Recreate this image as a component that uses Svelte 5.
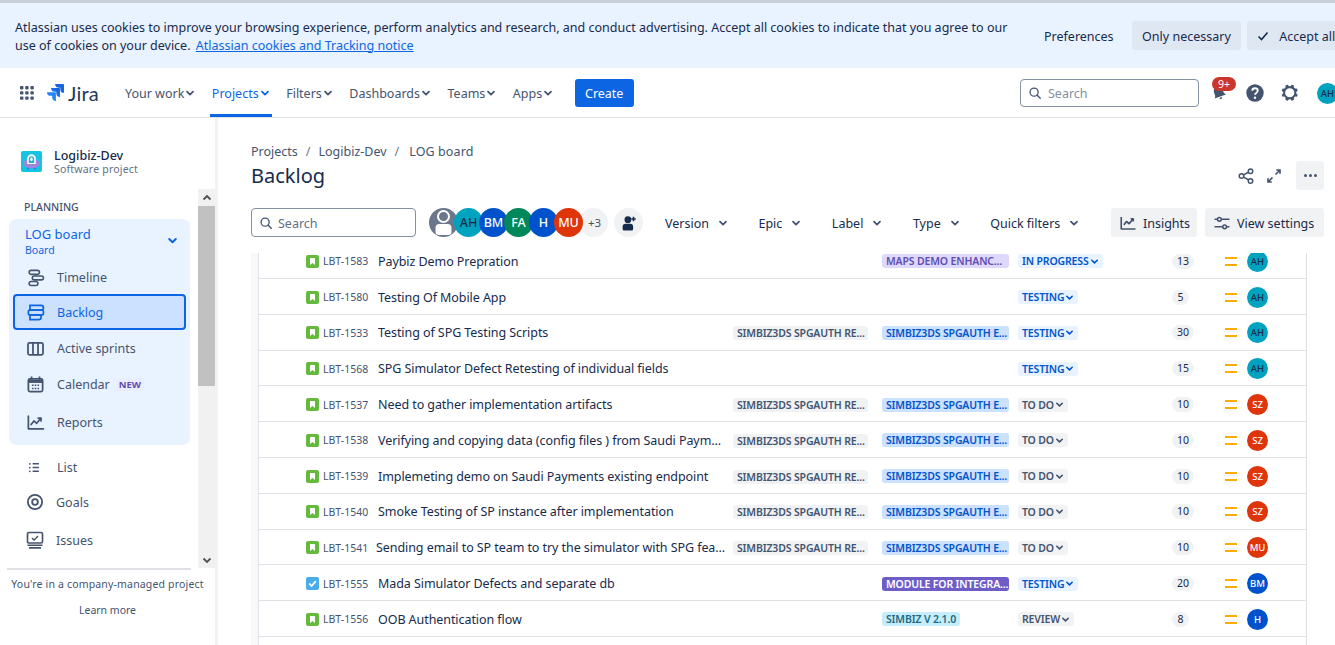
<script>
  const NAV = [
    { label: 'Your work' },
    { label: 'Projects', active: true },
    { label: 'Filters' },
    { label: 'Dashboards' },
    { label: 'Teams' },
    { label: 'Apps' }
  ];
  const LBL = 'SIMBIZ3DS SPGAUTH RE...';
  const EPIC = 'SIMBIZ3DS SPGAUTH E...';
  const ROWS = [
    { key: 'LBT-1583', title: 'Paybiz Demo Prepration', epic: 'MAPS DEMO ENHANC...', ec: 'lav', st: 'IN PROGRESS', sc: 'blue', est: 13, av: 'AH' },
    { key: 'LBT-1580', title: 'Testing Of Mobile App', st: 'TESTING', sc: 'blue', est: 5, av: 'AH' },
    { key: 'LBT-1533', title: 'Testing of SPG Testing Scripts', label: LBL, epic: EPIC, ec: 'sky', st: 'TESTING', sc: 'blue', est: 30, av: 'AH' },
    { key: 'LBT-1568', title: 'SPG Simulator Defect Retesting of individual fields', st: 'TESTING', sc: 'blue', est: 15, av: 'AH' },
    { key: 'LBT-1537', title: 'Need to gather implementation artifacts', label: LBL, epic: EPIC, ec: 'sky', st: 'TO DO', sc: 'grey', est: 10, av: 'SZ' },
    { key: 'LBT-1538', title: 'Verifying and copying data (config files ) from Saudi Paym...', label: LBL, epic: EPIC, ec: 'sky', st: 'TO DO', sc: 'grey', est: 10, av: 'SZ' },
    { key: 'LBT-1539', title: 'Implemeting demo on Saudi Payments existing endpoint', label: LBL, epic: EPIC, ec: 'sky', st: 'TO DO', sc: 'grey', est: 10, av: 'SZ' },
    { key: 'LBT-1540', title: 'Smoke Testing of SP instance after implementation', label: LBL, epic: EPIC, ec: 'sky', st: 'TO DO', sc: 'grey', est: 10, av: 'SZ' },
    { key: 'LBT-1541', tight: true, title: 'Sending email to SP team to try the simulator with SPG fea...', label: LBL, epic: EPIC, ec: 'sky', st: 'TO DO', sc: 'grey', est: 10, av: 'MU' },
    { key: 'LBT-1555', title: 'Mada Simulator Defects and separate db', task: true, epic: 'MODULE FOR INTEGRA...', ec: 'violet', st: 'TESTING', sc: 'blue', est: 20, av: 'BM' },
    { key: 'LBT-1556', title: 'OOB Authentication flow', epic: 'SIMBIZ V 2.1.0', ec: 'cyan', st: 'REVIEW', sc: 'grey', est: 8, av: 'H' },
    { key: '', title: '', st: '', est: '', av: 'H' }
  ];
  const AVC = { AH: 'teal', SZ: 'red', MU: 'red', BM: 'blue', H: 'blue', FA: 'green' };
  const FILTERS = ['Version', 'Epic', 'Label', 'Type', 'Quick filters'];
</script>

{#snippet chev(cls = '')}
  <svg class="chev {cls}" viewBox="0 0 10 10"><path d="M2 3.6 5 6.6 8 3.6" fill="none" stroke="currentColor" stroke-width="1.8" stroke-linecap="round" stroke-linejoin="round"/></svg>
{/snippet}

{#snippet searchIcon()}
  <svg class="sicon" viewBox="0 0 16 16"><circle cx="7" cy="7" r="4.6" fill="none" stroke="#44546f" stroke-width="1.5"/><path d="M10.5 10.5 14 14" stroke="#44546f" stroke-width="1.6" stroke-linecap="round"/></svg>
{/snippet}

<div class="app">
  <section class="banner">
    <p class="banner-text">Atlassian uses cookies to improve your browsing experience, perform analytics and research, and conduct advertising. Accept all cookies to indicate that you agree to our use of cookies on your device. <a href="#top">Atlassian cookies and Tracking notice</a></p>
    <div class="banner-actions">
      <button class="bbtn plain">Preferences</button>
      <button class="bbtn">Only necessary</button>
      <button class="bbtn accept">
        <svg viewBox="0 0 14 14"><path d="M2.5 7.5 5.5 10.5 11.5 3.5" fill="none" stroke="#172b4d" stroke-width="1.6"/></svg>
        Accept all
      </button>
    </div>
  </section>

  <header class="nav">
    <svg class="apps" viewBox="0 0 14 14" fill="#44546f">
      {#each [0, 5.2, 10.4] as y}
        {#each [0, 5.2, 10.4] as x}
          <rect x={x} y={y} width="3.4" height="3.4" rx="0.8"/>
        {/each}
      {/each}
    </svg>
    <div class="logo">
      <svg viewBox="0 0 24 24"><defs><linearGradient id="jg" x1="1" y1="0" x2="0" y2="1"><stop offset="0" stop-color="#0c5fd8"/><stop offset="1" stop-color="#2684ff"/></linearGradient></defs><path fill="#2684ff" d="M11.571 11.513H0a5.218 5.218 0 0 0 5.232 5.215h2.13v2.057A5.215 5.215 0 0 0 12.575 24V12.518a1.005 1.005 0 0 0-1.005-1.005z"/><path fill="url(#jg)" d="M17.294 5.757H5.736a5.215 5.215 0 0 0 5.215 5.214h2.129v2.058a5.218 5.218 0 0 0 5.215 5.214V6.758a1.001 1.001 0 0 0-1.001-1.001z"/><path fill="#1868db" d="M23.013 0H11.455a5.215 5.215 0 0 0 5.215 5.215h2.129v2.057A5.215 5.215 0 0 0 24 12.483V1.005A1.001 1.001 0 0 0 23.013 0z"/></svg>
      <span>Jira</span>
    </div>
    <nav class="menu">
      {#each NAV as n}
        <button class="nitem" class:active={n.active}>{n.label}{@render chev()}</button>
      {/each}
    </nav>
    <button class="create">Create</button>
    <div class="nav-right">
      <div class="gsearch">{@render searchIcon()}<span>Search</span></div>
      <div class="bell">
        <svg viewBox="0 0 24 24"><g transform="rotate(-20 12 12)"><path fill="#44546f" d="M12 3a6 6 0 0 0-6 6v5l-2 3h16l-2-3V9a6 6 0 0 0-6-6zM10 18.5h4a2 2 0 0 1-4 0z"/></g></svg>
        <span class="badge">9+</span>
      </div>
      <svg class="help" viewBox="0 0 24 24"><circle cx="12" cy="12" r="9.5" fill="#44546f"/><path d="M9 9.6c0-1.8 1.4-2.8 3-2.8s3 1 3 2.6c0 1.3-.8 1.9-1.6 2.5-.8.5-1.4 1-1.4 2" fill="none" stroke="#fff" stroke-width="2"/><circle cx="12" cy="17.2" r="1.3" fill="#fff"/></svg>
      <svg class="gear" viewBox="0 0 24 24"><path fill="#44546f" fill-rule="evenodd" d="M11.701 16.7a5.002 5.002 0 110-10.003 5.002 5.002 0 010 10.004m8.368-3.117a1.995 1.995 0 01-1.346-1.885c0-.876.563-1.613 1.345-1.885a.48.48 0 00.315-.574 8.947 8.947 0 00-.836-1.993.477.477 0 00-.598-.195 2.04 2.04 0 01-1.29.08 1.988 1.988 0 01-1.404-1.395 2.04 2.04 0 01.076-1.297.478.478 0 00-.196-.597 8.98 8.98 0 00-1.975-.826.479.479 0 00-.574.314 1.995 1.995 0 01-1.885 1.346 1.994 1.994 0 01-1.884-1.345.482.482 0 00-.575-.315c-.708.2-1.379.485-2.004.842a.47.47 0 00-.198.582A2.002 2.002 0 014.445 7.06a.478.478 0 00-.595.196 8.946 8.946 0 00-.833 1.994.48.48 0 00.308.572 1.995 1.995 0 011.323 1.877c0 .867-.552 1.599-1.324 1.877a.479.479 0 00-.308.57 8.99 8.99 0 00.723 1.79.477.477 0 00.624.194c.595-.273 1.343-.264 2.104.238.117.077.225.185.302.3.527.8.512 1.58.198 2.188a.473.473 0 00.168.628 8.946 8.946 0 002.11.897.474.474 0 00.57-.313 1.995 1.995 0 011.886-1.353c.878 0 1.618.567 1.887 1.353a.475.475 0 00.57.313 8.964 8.964 0 002.084-.883.473.473 0 00.167-.631c-.318-.608-.337-1.393.191-2.195.077-.116.185-.225.302-.302.772-.511 1.527-.513 2.125-.23a.477.477 0 00.628-.19 8.925 8.925 0 00.728-1.793.478.478 0 00-.314-.573"/></svg>
      <span class="av teal tav">AH</span>
    </div>
  </header>

  <div class="body">
    <aside class="side">
      <div class="side-scroll">
        <div class="side-inner">
          <div class="project">
            <svg class="plogo" viewBox="0 0 21 21"><rect width="21" height="21" rx="2" fill="#14c4e4"/><path d="M7 16.500v2M14 16.500v2" stroke="#5e4db2" stroke-width="1.2"/><ellipse cx="10.500" cy="12.500" rx="8.500" ry="4.800" fill="#9a86e0"/><path d="M6.200 13V7.500a4.300 4.300 0 0 1 8.600 0V13z" fill="#fff"/><path d="M7.800 12V8a2.700 2.700 0 0 1 5.400 0v4z" fill="#2aa6e0"/><ellipse cx="10.500" cy="8.300" rx="1.200" ry="2" fill="#fff"/></svg>
            <div>
              <div class="pname">Logibiz-Dev</div>
              <div class="ptype">Software project</div>
            </div>
          </div>
          <div class="planning">PLANNING</div>
          <div class="panel">
            <div class="board">
              <div>
                <div class="bname">LOG board</div>
                <div class="bsub">Board</div>
              </div>
              {@render chev('bchev')}
            </div>
            <a class="sitem timeline" href="#top">
              <svg viewBox="0 0 24 24" fill="none" stroke="#44546f" stroke-width="2"><rect x="4" y="3" width="13" height="5" rx="2.500"/><rect x="8" y="10" width="14" height="5" rx="2.500"/><rect x="4" y="17" width="11" height="5" rx="2.500"/></svg>
              Timeline
            </a>
            <a class="sitem selected" href="#top">
              <svg viewBox="0 0 24 24" fill="none" stroke="#0c66e4" stroke-width="2.200"><path d="M5 3h14a2 2 0 0 1 0 6H5z"/><rect x="3" y="9" width="19" height="6" rx="1.500"/><path d="M5 15h14v3a3 3 0 0 1-3 3H5z"/></svg>
              Backlog
            </a>
            <a class="sitem" href="#top">
              <svg viewBox="0 0 24 24" fill="none" stroke="#44546f" stroke-width="2.200"><rect x="2.500" y="5" width="19" height="15" rx="2"/><path d="M8.800 5v15M15.200 5v15"/></svg>
              Active sprints
            </a>
            <a class="sitem" href="#top">
              <svg viewBox="0 0 24 24"><rect x="3" y="5" width="18" height="16" rx="2" fill="none" stroke="#44546f" stroke-width="2.200"/><path d="M3 8h18" stroke="#44546f" stroke-width="4"/><path d="M7 2v4M17 2v4" stroke="#44546f" stroke-width="2.200"/><path d="M7.500 13h2M11 13h2M14.500 13h2M7.500 17h2M11 17h2M14.500 17h2" stroke="#44546f" stroke-width="2"/></svg>
              Calendar <span class="new">NEW</span>
            </a>
            <a class="sitem reports" href="#top">
              <svg viewBox="0 0 24 24" fill="none" stroke="#44546f" stroke-width="2.200" stroke-linecap="round" stroke-linejoin="round"><path d="M3 4v16h19"/><path d="M6.500 14.500 10 10l3.500 3 5-6"/><path d="M15.500 6.500h3.500V10"/></svg>
              Reports
            </a>
          </div>
          <a class="sitem out lst" href="#top">
            <svg viewBox="0 0 24 24"><path d="M9 6h10M9 12h10M9 18h10" stroke="#44546f" stroke-width="2.400"/><circle cx="4.500" cy="6" r="1.400" fill="#44546f"/><circle cx="4.500" cy="12" r="1.400" fill="#44546f"/><circle cx="4.500" cy="18" r="1.400" fill="#44546f"/></svg>
            List
          </a>
          <a class="sitem out goals" href="#top">
            <svg viewBox="0 0 24 24" fill="none" stroke="#44546f"><circle cx="12" cy="12" r="9.500" stroke-width="2.400"/><circle cx="12" cy="12" r="3.800" stroke-width="2.400"/></svg>
            Goals
          </a>
          <a class="sitem out issues" href="#top">
            <svg viewBox="0 0 24 24" fill="none" stroke="#44546f" stroke-width="2.200"><rect x="2" y="2" width="20" height="14" rx="2"/><path d="M8 9.500 10.800 12 16 6.800" stroke-width="1.800"/><path d="M2 19h20M4 22.500h16"/></svg>
            Issues
          </a>
        </div>
        <div class="scrollbar">
          <div class="sb-btn"><svg viewBox="0 0 10 10"><path d="M1.500 6.500 5 3l3.500 3.500" fill="none" stroke="#505050" stroke-width="1.800"/></svg></div>
          <div class="sb-track"><div class="sb-thumb"></div></div>
          <div class="sb-btn"><svg viewBox="0 0 10 10"><path d="M1.500 3.500 5 7l3.500-3.500" fill="none" stroke="#505050" stroke-width="1.800"/></svg></div>
        </div>
      </div>
      <div class="foot-line"></div>
      <div class="side-foot">
        <div>You're in a company-managed project</div>
        <div class="learn">Learn more</div>
      </div>
    </aside>

    <main class="main">
      <div class="head">
        <div class="crumbs"><span>Projects</span><i>/</i><span>Logibiz-Dev</span><i>/</i><span>LOG board</span></div>
        <div class="title-row">
          <h1>Backlog</h1>
          <div class="title-actions">
            <svg viewBox="0 0 24 24" fill="none" stroke="#44546f" stroke-width="2"><circle cx="6" cy="12" r="3"/><circle cx="18" cy="5.500" r="3"/><circle cx="18" cy="18.500" r="3"/><path d="M8.700 10.600 15.300 7M8.700 13.400l6.600 3.600"/></svg>
            <svg viewBox="0 0 24 24" fill="none" stroke="#44546f" stroke-width="2.200"><path d="M14 10l6-6M15 4h5v5M10 14l-6 6M4 15v5h5"/></svg>
            <button class="more" aria-label="More"><b></b><b></b><b></b></button>
          </div>
        </div>
        <div class="toolbar">
          <div class="bsearch">{@render searchIcon()}<span>Search</span></div>
          <div class="avatars">
            <span class="big unassigned"><svg viewBox="0 0 29 29"><circle cx="14.500" cy="8.500" r="5.500" fill="none" stroke="#fff" stroke-width="2"/><path d="M6.500 20a4 4 0 0 1 4-4h8a4 4 0 0 1 4 4v4a3 3 0 0 1-3 3h-10a3 3 0 0 1-3-3z" fill="#fff"/></svg></span>
            <span class="big teal dark">AH</span>
            <span class="big blue">BM</span>
            <span class="big green">FA</span>
            <span class="big blue">H</span>
            <span class="big red">MU</span>
            <span class="big extra">+3</span>
          </div>
          <button class="addp" aria-label="Add people">
            <svg viewBox="0 0 24 24" fill="#172b4d"><circle cx="10.500" cy="7.500" r="4.500"/><path d="M3.500 17a4 4 0 0 1 4-4h6a4 4 0 0 1 4 4v3a2 2 0 0 1-2 2h-10a2 2 0 0 1-2-2z"/><path d="M18 3.500v6M15 6.500h6" stroke="#172b4d" stroke-width="2"/></svg>
          </button>
          <div class="filters">
            {#each FILTERS as f}
              <button class="filter">{f}{@render chev()}</button>
            {/each}
          </div>
          <button class="tbtn insights">
            <svg viewBox="0 0 24 24" fill="none" stroke="#44546f" stroke-width="2.200" stroke-linejoin="round"><path d="M3 4v16h19"/><path d="M6.500 14.500 10 10l3.500 3 5-6"/><path d="M15.500 6.500h3.500V10"/></svg>
            Insights
          </button>
          <button class="tbtn settings">
            <svg viewBox="0 0 24 24" fill="none" stroke="#44546f" stroke-width="2"><path d="M2 7h4M11 7h11M2 17h11M18 17h4"/><circle cx="8.500" cy="7" r="2.500"/><circle cx="15.500" cy="17" r="2.500"/></svg>
            View settings
          </button>
        </div>
      </div>

      <div class="list-wrap">
        <div class="list">
          {#each ROWS as r}
            <div class="row">
              <div class="cell-main">
                {#if r.key}
                  {#if r.task}
                    <svg class="itype" viewBox="0 0 13 13"><rect width="13" height="13" rx="2" fill="#4bade8"/><path d="M3.300 6.700 5.600 9 9.800 4.200" fill="none" stroke="#fff" stroke-width="1.800"/></svg>
                  {:else}
                    <svg class="itype" viewBox="0 0 13 13"><rect width="13" height="13" rx="2" fill="#63ba3c"/><path d="M4 3.500a.5.500 0 0 1 .5-.5h4a.5.500 0 0 1 .5.500V10L6.500 8 4 10z" fill="#fff"/></svg>
                  {/if}
                  <span class="key" class:tight={r.tight}>{r.key}</span>
                  <span class="summary">{r.title}</span>
                {/if}
              </div>
              <div class="cell">{#if r.label}<span class="chip label">{r.label}</span>{/if}</div>
              <div class="cell">{#if r.epic}<span class="chip epic {r.ec}">{r.epic}</span>{/if}</div>
              <div class="cell">{#if r.st}<span class="chip status {r.sc}">{r.st}{@render chev()}</span>{/if}</div>
              <div class="cell">{#if r.est !== ''}<span class="est">{r.est}</span>{/if}</div>
              <div class="cell">
                {#if r.key}<svg class="prio" viewBox="0 0 12 9"><path d="M0 1h12M0 8h12" stroke="#ffab00" stroke-width="2"/></svg>{/if}
              </div>
              <div class="cell"><span class="av {AVC[r.av]}" class:dark={r.av === 'AH'}>{r.key ? r.av : ''}</span></div>
            </div>
          {/each}
        </div>
      </div>
    </main>
  </div>
</div>

<style>
  :global(body) { margin: 0; background: #fff; overflow: hidden; }
  :global(html) { overflow: hidden; }
  .app {
    height: 645px; display: flex; flex-direction: column; overflow: hidden;
    font-family: "Noto Sans", "Open Sans", sans-serif; font-size: 12.5px; color: #172b4d;
  }
  button { font: inherit; border: 0; background: none; color: inherit; padding: 0; cursor: pointer; }
  a { color: inherit; text-decoration: none; }
  svg { display: block; flex: none; }

  .banner {
    height: 65px; flex: none; background: #e9f2ff;
    border-top: 3px solid #c8ced6; border-bottom: 1px solid #c4cfdf; margin-bottom: -1px;
    display: flex; align-items: flex-start; padding-left: 15px; width: 1400px;
  }
  .banner-text { margin: 16px 0 0; width: 1000px; line-height: 17.5px; font-size: 12.5px; }
  .banner-text a { color: #0c66e4; text-decoration: underline; margin-left: 2px; }
  .banner-actions { display: flex; margin: 18px 0 0 11px; gap: 6px; }
  .bbtn { height: 29px; padding: 0 10.5px; background: #dfe7f3; border-radius: 3px; display: flex; align-items: center; gap: 9px; padding-top: 1px; box-sizing: border-box; }
  .bbtn.plain { background: none; padding: 0 11px 0 18px; margin-right: 1px; padding-top: 1px; }
  .bbtn.accept svg { width: 14px; height: 14px; }
  .bbtn.accept { padding: 1px 40px 0 9px; }

  .nav { height: 49px; flex: none; border-bottom: 1px solid #dfe1e6; display: flex; align-items: center; position: relative; padding-left: 20px; background: #fff; }
  .apps { width: 14px; height: 14px; }
  .logo { display: flex; align-items: center; margin-left: 13px; gap: 4px; color: #253858; }
  .logo svg { width: 17px; height: 17px; }
  .logo span { font-size: 20px; line-height: 20px; font-family: "Lato", sans-serif; letter-spacing: .2px; }
  .menu { display: flex; margin-left: 24px; height: 100%; }
  .nitem { height: 49px; padding: 1px 2px 0; margin-right: 12.5px; color: #44546f; display: flex; align-items: center; gap: 1px; white-space: nowrap; position: relative; font-size: 12.5px; box-sizing: border-box; }
  .nitem .chev { width: 10px; height: 10px; }
  .nitem.active { color: #0c66e4; }
  .nitem.active::after { content: ""; position: absolute; left: 0; right: 0; bottom: 0; height: 3px; background: #0c66e4; }
  .create { margin-left: 7px; width: 59px; height: 28px; background: #0c66e4; color: #fff; border-radius: 3px; padding-top: 1px; box-sizing: border-box; }
  .nav-right { position: absolute; left: 1020px; top: 11px; display: flex; align-items: center; width: 330px; height: 28px; }
  .gsearch, .bsearch { box-sizing: border-box; border: 1px solid #8590a2; border-radius: 4px; display: flex; align-items: center; gap: 6px; padding-left: 7px; color: #8590a2; background: #fff; }
  .gsearch { width: 179px; height: 28px; }
  .sicon { width: 14px; height: 14px; }
  .bell { position: relative; width: 18px; height: 18px; margin-left: 11px; }
  .bell svg { width: 18px; height: 18px; }
  .badge { position: absolute; left: 2px; top: -7px; width: 24px; height: 14px; background: #c9372c; border-radius: 8px; color: #fff; font-size: 10.5px; line-height: 14px; text-align: center; }
  .help { width: 22px; height: 22px; margin-left: 16px; }
  .gear { width: 22px; height: 22px; margin-left: 13px; }
  .av { width: 21px; height: 21px; border-radius: 50%; flex: none; display: flex; align-items: center; justify-content: center; color: #fff; font-size: 9.5px; font-weight: 500; }
  .tav { margin-left: 16px; }
  .teal { background: #00a3bf; color: #172b4d; }
  .red { background: #de350b; }
  .blue { background: #0052cc; }
  .green { background: #00875a; }

  .body { flex: 1; display: flex; min-height: 0; }
  .side { width: 215px; flex: none; border-right: 3px solid #f1f2f4; display: flex; flex-direction: column; height: 527px; background: #fff; }
  .side-scroll { height: 450px; flex: none; display: flex; }
  .side-inner { width: 198px; flex: none; }
  .project { display: flex; align-items: center; gap: 12px; padding: 31px 0 0 21px; }
  .plogo { width: 21px; height: 21px; margin-top: -3px; }
  .pname { font-size: 12.5px; line-height: 14px; font-weight: 500; }
  .ptype { font-size: 10.5px; line-height: 13px; color: #626f86; letter-spacing: .2px; }
  .planning { font-size: 10.5px; color: #44546f; font-weight: 500; margin: 24px 0 0 24px; line-height: 14px; }
  .panel { margin: 5px 8px 0 9px; background: #e9f2ff; border-radius: 8px; height: 226px; }
  .board { display: flex; align-items: flex-start; justify-content: space-between; padding: 7px 12px 0 16px; height: 33px; color: #0c66e4; }
  .bname { font-size: 13px; line-height: 16px; }
  .bsub { font-size: 10.5px; line-height: 15px; margin-top: 1px; }
  .bchev { width: 11px; height: 11px; color: #0c66e4; margin-top: 9px; }
  .sitem { display: flex; align-items: center; gap: 12px; height: 36px; padding-left: 15px; color: #44546f; box-sizing: border-box; margin: 0 4px; font-size: 12.5px; }
  .sitem svg { width: 19px; height: 19px; margin-left: -2px; }
  .timeline { height: 35px; padding-top: 1px; }
  .selected { background: #cce0ff; border: 2px solid #0c66e4; border-radius: 4px; color: #0c66e4; padding-left: 13px; padding-top: 1px; position: relative; }
  .new { font-size: 9.5px; font-weight: 700; color: #5e4db2; background: #eae6ff66; padding: 0 3px; margin-left: -6px; border-radius: 2px; }
  .reports { height: 40px; }
  .out { margin: 0; padding-left: 25px; }
  .out.lst { margin-top: 5px; height: 34px; }
  .out.lst svg { width: 15px; height: 15px; margin-left: 2px; margin-right: 3px; }
  .out.goals svg { width: 18px; height: 18px; margin-left: 1px; }
  .out.issues { height: 40px; }
  .out.issues svg { width: 18px; height: 18px; margin-left: 1px; }
  .scrollbar { width: 17px; flex: none; background: #f1f1f1; display: flex; flex-direction: column; margin-top: 71px; height: 379px; }
  .sb-btn { height: 17px; display: flex; align-items: center; justify-content: center; flex: none; }
  .sb-btn svg { width: 10px; height: 10px; }
  .sb-track { flex: 1; }
  .sb-thumb { height: 180px; background: #c1c1c1; }
  .foot-line { margin-left: 7px; width: 184px; height: 2px; background: #dfe1e6; flex: none; }
  .side-foot { text-align: center; font-size: 10.5px; letter-spacing: .17px; color: #44546f; white-space: nowrap; padding-top: 7px; line-height: 14px; }
  .learn { margin-top: 12px; letter-spacing: 0; }

  .main { flex: 1; min-width: 0; padding-left: 33px; display: flex; flex-direction: column; }
  .head { height: 135px; flex: none; width: 1073px; }
  .crumbs { display: flex; gap: 8px; color: #44546f; padding-top: 25px; line-height: 17px; font-size: 12.5px; }
  .crumbs i { font-style: normal; color: #6b778c; }
  .crumbs span:last-child { margin-left: 2px; letter-spacing: .1px; }
  .title-row { display: flex; justify-content: space-between; align-items: flex-start; height: 47px; }
  h1 { margin: 0; font-size: 20px; font-weight: 400; line-height: 31px; }
  .title-actions { display: flex; align-items: center; margin-top: 1px; gap: 10px; }
  .title-actions svg { width: 18px; height: 18px; }
  .more { width: 28px; height: 29px; background: #f1f2f4; border-radius: 3px; display: flex; align-items: center; justify-content: center; gap: 2px; margin-left: 3px; }
  .more b { width: 3px; height: 3px; background: #44546f; border-radius: 50%; }
  .toolbar { display: flex; align-items: center; height: 29px; margin-top: 1px; position: relative; }
  .bsearch { width: 165px; height: 29px; color: #626f86; gap: 5px; padding-top: 1px; }
  .avatars { display: flex; margin-left: 13px; isolation: isolate; }
  .big { width: 29px; height: 29px; border-radius: 50%; display: flex; align-items: center; justify-content: center; color: #fff; font-size: 12.5px; font-weight: 500; margin-left: -4px; box-sizing: border-box; overflow: hidden; flex: none; position: relative; z-index: 1; }
  .big:first-child { margin-left: 0; }
  .unassigned { background: #6b778c; }
  .unassigned svg { width: 29px; height: 29px; }
  .big.dark { color: #172b4d; }
  .extra { background: #f1f2f4; color: #44546f; font-size: 11.5px; font-weight: 400; z-index: 0; padding-left: 2px; }
  .addp { width: 29px; height: 29px; border-radius: 50%; background: #f1f2f4; margin-left: 6px; display: flex; align-items: center; justify-content: center; }
  .addp svg { width: 18px; height: 18px; }
  .filters { display: flex; margin-left: 22px; }
  .filter { display: flex; align-items: center; gap: 9px; margin-right: 30.5px; white-space: nowrap; color: #172b4d; padding-top: 1px; }
  .filter .chev { width: 10px; height: 10px; color: #44546f; }
  .tbtn { height: 29px; background: #f1f2f4; border-radius: 3px; display: flex; align-items: center; white-space: nowrap; color: #172b4d; position: absolute; top: 0; padding: 1px 0 0 8px; box-sizing: border-box; }
  .tbtn svg { width: 18px; height: 18px; margin-top: -1px; }
  .insights { left: 860px; width: 86px; gap: 6px; }
  .settings { left: 954px; width: 119px; gap: 6px; }

  .list-wrap { flex: 1; min-height: 0; overflow: hidden; background: #f7f8f9; padding-left: 7px; width: 1056px; box-sizing: border-box; position: relative; }
  .list { background: #fff; border-left: 1px solid #dfe1e6; border-right: 1px solid #dfe1e6; margin-top: -9.8px; }
  .row { height: 35.8px; box-sizing: border-box; border-bottom: 1px solid #dfe1e6; display: grid; grid-template-columns: 474px 149px 136px 154px 53px 22px 59px; align-items: center; padding-top: 1.6px; }
  .cell-main { display: flex; align-items: center; padding-left: 47px; min-width: 0; }
  .itype { width: 13px; height: 13px; }
  .key { font-size: 10.5px; color: #44546f; margin-left: 4px; white-space: nowrap; flex: none; width: 55px; }
  .key.tight { width: 53px; }
  .summary { white-space: nowrap; overflow: hidden; flex: 1; min-width: 0; color: #172b4d; font-size: 12.5px; letter-spacing: -.07px; }
  .cell { display: flex; align-items: center; min-width: 0; }
  .chip { height: 14px; line-height: 14px; border-radius: 3px; font-size: 10.5px; font-weight: 600; letter-spacing: -.15px; padding: 0 4px; white-space: nowrap; box-sizing: border-box; display: flex; align-items: center; }
  .label { width: 135px; background: #f1f2f4; color: #44546f; margin-top: 1px; }
  .epic { background: #cce0ff; color: #0055cc; }
  .epic.sky, .epic.lav, .epic.violet { width: 127px; }
  .epic.lav { background: #dfd8fd; color: #5e4db2; }
  .epic.violet { background: #6e5dc6; color: #fff; }
  .epic.cyan { background: #c6edfb; color: #206a83; }
  .status.blue { background: #e9f2ff; color: #0055cc; }
  .status.grey { background: #f1f2f4; color: #44546f; }
  .status .chev { width: 9px; height: 9px; margin-left: 1px; }
  .est { height: 15px; min-width: 17px; box-sizing: border-box; line-height: 15px; background: #f1f2f4; border-radius: 8px; text-align: center; font-size: 10.5px; display: block; color: #172b4d; padding: 0 5px; }
  .prio { width: 12px; height: 9px; }
</style>
